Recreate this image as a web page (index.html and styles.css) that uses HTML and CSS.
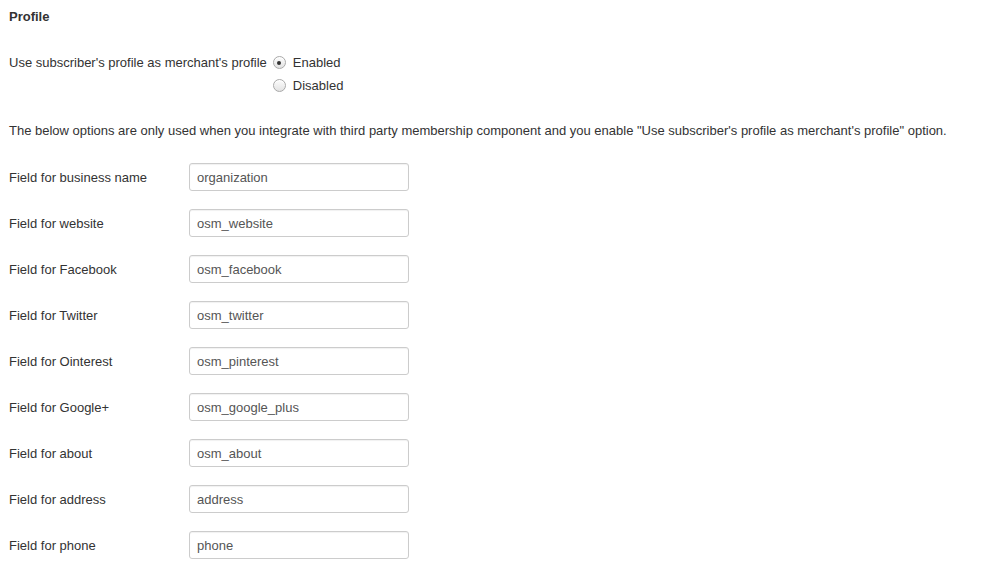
FILE: index.html
```html
<!DOCTYPE html>
<html>
<head>
<meta charset="utf-8">
<link rel="stylesheet" href="styles.css">
</head>
<body>
<div class="page">
  <h3 class="title">Profile</h3>
  <div class="choice">
    <span class="choice-label">Use subscriber's profile as merchant's profile</span>
    <div class="options">
      <label class="option"><input type="radio" name="p" class="radio" checked><span>Enabled</span></label>
      <label class="option"><input type="radio" name="p" class="radio"><span>Disabled</span></label>
    </div>
  </div>
  <p class="note">The below options are only used when you integrate with third party membership component and you enable "Use subscriber's profile as merchant's profile" option.</p>
  <div class="fields">
    <div class="row"><span class="label">Field for business name</span><input class="field" type="text" value="organization"></div>
    <div class="row"><span class="label">Field for website</span><input class="field" type="text" value="osm_website"></div>
    <div class="row"><span class="label">Field for Facebook</span><input class="field" type="text" value="osm_facebook"></div>
    <div class="row"><span class="label">Field for Twitter</span><input class="field" type="text" value="osm_twitter"></div>
    <div class="row"><span class="label">Field for Ointerest</span><input class="field" type="text" value="osm_pinterest"></div>
    <div class="row"><span class="label">Field for Google+</span><input class="field" type="text" value="osm_google_plus"></div>
    <div class="row"><span class="label">Field for about</span><input class="field" type="text" value="osm_about"></div>
    <div class="row"><span class="label">Field for address</span><input class="field" type="text" value="address"></div>
    <div class="row"><span class="label">Field for phone</span><input class="field" type="text" value="phone"></div>
  </div>
</div>
</body>
</html>
```
FILE: styles.css
```css
html, body {
  margin: 0;
  padding: 0;
  background: #fff;
}
body {
  font-family: "Liberation Sans", Arial, Helvetica, sans-serif;
  font-size: 13px;
  color: #333;
}
.page {
  padding: 8px 9px 0 9px;
}
.title {
  margin: 0;
  font-size: 13px;
  font-weight: bold;
  line-height: 18px;
}
.choice {
  display: flex;
  align-items: flex-start;
  gap: 6px;
  margin-top: 25px;
}
.choice-label {
  line-height: 23px;
}
.options {
  display: flex;
  flex-direction: column;
}
.option {
  display: flex;
  align-items: center;
  gap: 7px;
  height: 23px;
}
.radio {
  appearance: none;
  -webkit-appearance: none;
  margin: 0;
  width: 13px;
  height: 13px;
  border-radius: 50%;
  border: 1px solid #a9a9a9;
  background: linear-gradient(#fdfdfd, #e2e2e2);
  box-shadow: inset 0 1px 0 #fff;
  display: grid;
  place-items: center;
  box-sizing: border-box;
}
.radio:checked::after {
  content: "";
  width: 4px;
  height: 4px;
  border-radius: 50%;
  background: #333;
}
.note {
  margin: 25px 0 0 0;
  line-height: 18px;
}
.fields {
  display: flex;
  flex-direction: column;
  gap: 18px;
  margin-top: 23px;
}
.row {
  display: flex;
  align-items: center;
  height: 28px;
}
.label {
  width: 180px;
}
.field {
  box-sizing: border-box;
  width: 220px;
  height: 28px;
  margin: 0;
  padding: 0 7px;
  border: 1px solid #ccc;
  border-radius: 3px;
  box-shadow: inset 0 1px 1px rgba(0,0,0,0.06);
  font-family: "Liberation Sans", Arial, Helvetica, sans-serif;
  font-size: 13px;
  color: #555;
  background: #fff;
}
```
